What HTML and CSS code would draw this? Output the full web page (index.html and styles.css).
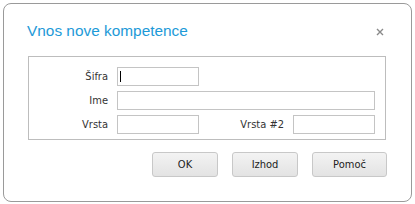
FILE: index.html
```html
<!DOCTYPE html>
<html>
<head>
    <title>Vnos nove kompetence</title>
    <link rel="stylesheet" href="styles.css">
</head>
<body>
    <div class="dialog">
        <div class="dialog-header">
            <div class="dialog-title">Vnos nove kompetence</div>
            <div class="dialog-close">
                <svg width="8" height="8" viewBox="0 0 8 8">
                    <path d="M1 1 L7 7 M7 1 L1 7" stroke="#8a8a8a" stroke-width="1.4"/>
                </svg>
            </div>
        </div>

        <div class="form-box">
            <label class="form-label">Šifra</label>
            <span class="field-wrap">
                <input type="text" class="form-input">
                <span class="caret"></span>
            </span>
            <span></span>
            <span></span>

            <label class="form-label">Ime</label>
            <input type="text" class="form-input wide">

            <label class="form-label">Vrsta</label>
            <input type="text" class="form-input">
            <label class="form-label">Vrsta #2</label>
            <input type="text" class="form-input">
        </div>

        <div class="button-row">
            <button class="dialog-button">OK</button>
            <button class="dialog-button">Izhod</button>
            <button class="dialog-button help">Pomoč</button>
        </div>
    </div>
</body>
</html>
```

FILE: styles.css
```css
body {
    margin: 0;
    padding: 3px;
    background-color: #fff;
    font-family: "DejaVu Sans Condensed", "DejaVu Sans", Tahoma, sans-serif;
}

.dialog {
    width: 407px;
    height: 197px;
    border: 1px solid #9a9a9a;
    border-radius: 8px;
    background-color: #fff;
    box-sizing: content-box;
}

.dialog-header {
    display: flex;
    align-items: center;
    justify-content: space-between;
    height: 52px;
    padding: 0 27px 0 23px;
}

.dialog-title {
    font-family: "Liberation Sans", Arial, sans-serif;
    font-size: 15.4px;
    color: #1d9ad8;
    padding-top: 2px;
}

.dialog-close {
    display: flex;
    padding-top: 4px;
}

.form-box {
    display: grid;
    grid-template-columns: 88px 82px 94px 82px;
    grid-auto-rows: 19px;
    row-gap: 5px;
    align-items: center;
    margin: 0 25px 0 24px;
    padding: 10px 9px 5px 0;
    border: 1px solid #bdbdbd;
}

.form-label {
    text-align: right;
    padding-right: 9px;
    font-size: 11px;
    color: #333;
}

.field-wrap {
    position: relative;
    display: flex;
    height: 19px;
}

.form-input {
    width: 82px;
    height: 19px;
    box-sizing: border-box;
    margin: 0;
    padding: 0 3px;
    border: 1px solid #c4c4c4;
    border-radius: 0;
    outline: none;
    font-size: 11px;
}

.form-input.wide {
    grid-column: 2 / 5;
    width: 100%;
}

.caret {
    position: absolute;
    left: 3px;
    top: 4px;
    width: 1px;
    height: 11px;
    background-color: #000;
}

.button-row {
    display: flex;
    justify-content: flex-end;
    gap: 14px;
    margin-top: 12px;
    padding-right: 24px;
}

.dialog-button {
    width: 66px;
    height: 25px;
    padding: 0;
    font-family: "DejaVu Sans Condensed", "DejaVu Sans", Tahoma, sans-serif;
    font-size: 11px;
    font-weight: normal;
    color: #222;
    border: 1px solid #c8c8c8;
    border-radius: 3px;
    background: linear-gradient(#f3f3f3, #e3e3e3);
}

.dialog-button.help {
    width: 75px;
}
```
